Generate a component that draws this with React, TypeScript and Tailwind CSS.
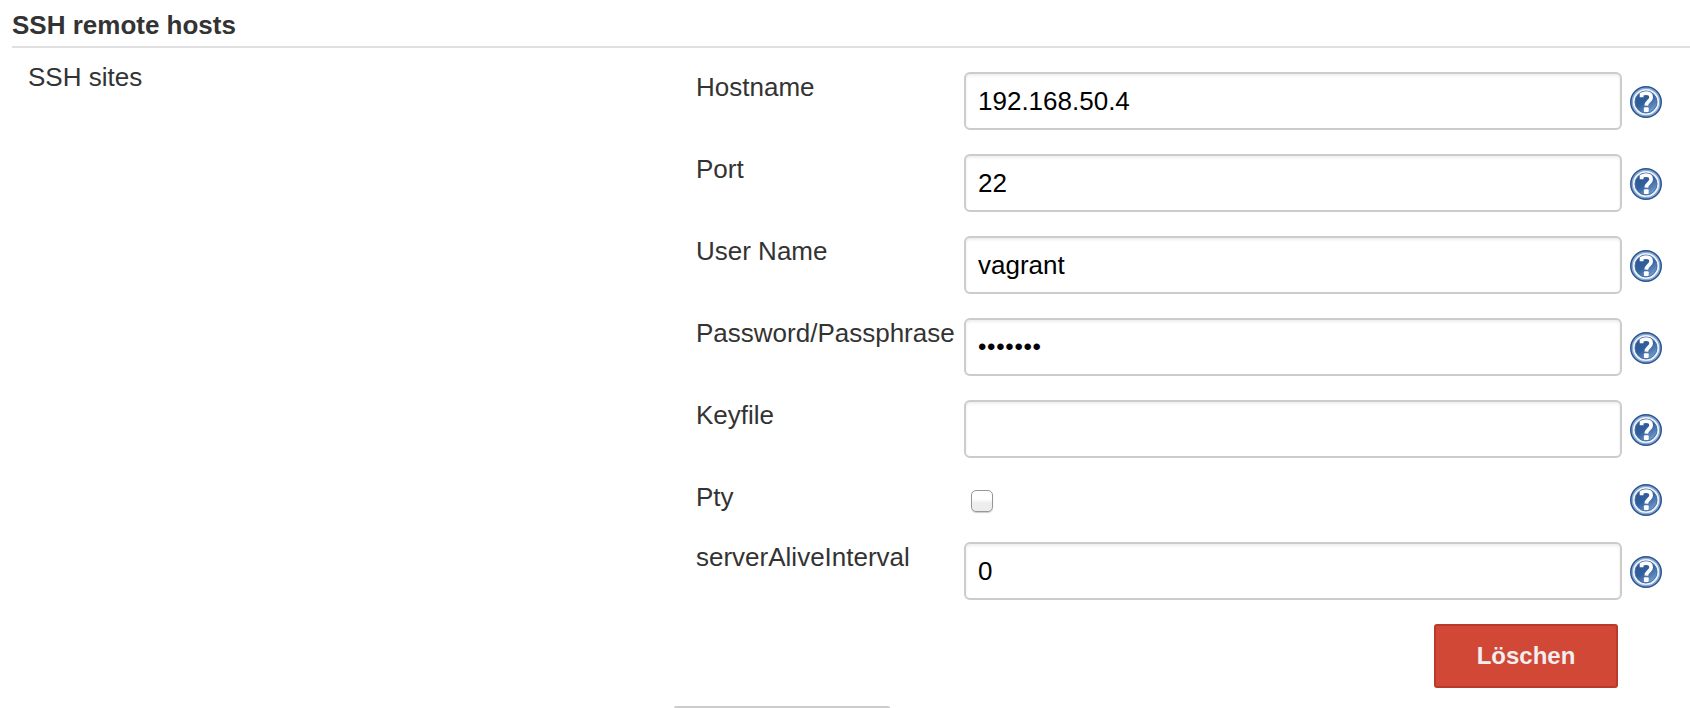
import React from "react";

const FONT = "font-['Liberation_Sans',Arial,sans-serif]";

function HelpIcon() {
  return (
    <svg viewBox="0 0 32 32" className="block h-8 w-8" role="img" aria-label="Help">
      <defs>
        <linearGradient id="help-fill" x1="0.1" y1="0" x2="0.8" y2="1">
          <stop offset="0" stopColor="#2c5590" />
          <stop offset="0.5" stopColor="#31609e" />
          <stop offset="1" stopColor="#7ba2d2" />
        </linearGradient>
      </defs>
      <circle cx="16" cy="16" r="15" fill="#f0f4fa" stroke="#2a5592" strokeWidth="2" />
      <circle cx="16" cy="16" r="13.8" fill="none" stroke="#86a5cf" strokeWidth="1.4" />
      <circle cx="16" cy="16" r="11" fill="url(#help-fill)" stroke="#4670a9" strokeWidth="1" />
      <path
        d="M11.6 11.3V8.4C13 7.5 14.4 7.2 16.2 7.2C19.2 7.2 21.1 8.8 21.1 11.5C21.1 15 16.4 15.4 16.3 19.6"
        fill="none"
        stroke="#fff"
        strokeWidth="3.8"
      />
      <rect x="13.9" y="21.3" width="4.8" height="4.8" rx="1" fill="#fff" />
    </svg>
  );
}

interface FieldProps {
  label: string;
  value: string;
  type?: string;
}

function Field({ label, value, type = "text" }: FieldProps) {
  const textStyle = type === "password" ? "text-[24px] tracking-[0.7px] pb-px" : "text-[26px] pt-px";
  return (
    <div className="flex h-[58px] items-start">
      <label className="w-[268px] shrink-0 whitespace-nowrap leading-[30px]">{label}</label>
      <input
        type={type}
        defaultValue={value}
        aria-label={label}
        className={`h-[58px] w-[658px] rounded-[6px] border-2 border-[#ccc] bg-white px-3 text-black shadow-[inset_0_2px_3px_rgba(0,0,0,0.07)] outline-none ${textStyle}`}
      />
      <div className="ml-2 self-center pt-[2px]">
        <HelpIcon />
      </div>
    </div>
  );
}

export default function App() {
  return (
    <div className={`flex h-[708px] w-full flex-col overflow-hidden bg-white pl-3 text-[26px] text-[#333] ${FONT}`}>
      <h2 className="h-12 border-b-2 border-[#e0e0e0] pt-[10px] text-[26px] leading-[30px] font-bold">
        SSH remote hosts
      </h2>
      <div className="flex flex-1">
        <div className="w-[650px] shrink-0 pt-[14px] pl-4 leading-[30px]">SSH sites</div>
        <div className="flex w-[1000px] shrink-0 flex-col pt-6">
          <div className="flex flex-col gap-6 pl-[34px]">
            <Field label="Hostname" value="192.168.50.4" />
            <Field label="Port" value="22" />
            <Field label="User Name" value="vagrant" />
            <Field label="Password/Passphrase" value="vagrant" type="password" />
            <Field label="Keyfile" value="" />
          </div>
          <div className="mt-6 flex h-[60px] items-start pl-[34px]">
            <label className="w-[275px] shrink-0 leading-[30px]">Pty</label>
            <input
              type="checkbox"
              aria-label="Pty"
              className="mt-2 h-[22px] w-[22px] appearance-none rounded-[5px] border border-[#979797] bg-linear-to-b from-white from-40% to-[#ededed] to-60% shadow-[0_1px_1px_rgba(0,0,0,0.2)]"
            />
            <div className="mt-[2px] ml-[637px]">
              <HelpIcon />
            </div>
          </div>
          <div className="pl-[34px]">
            <Field label="serverAliveInterval" value="0" />
          </div>
          <div className="mt-6 flex justify-end pr-[44px]">
            <button className="h-16 w-[184px] rounded-[3px] border-2 border-[#b93a2b] bg-[#d14836] pb-px text-[24px] font-bold text-[#f0eeee]">
              Löschen
            </button>
          </div>
          <div className="mt-[18px] ml-3 h-[2px] w-[216px] shrink-0 rounded-t-[2px] bg-[#ccc]" />
        </div>
      </div>
    </div>
  );
}
